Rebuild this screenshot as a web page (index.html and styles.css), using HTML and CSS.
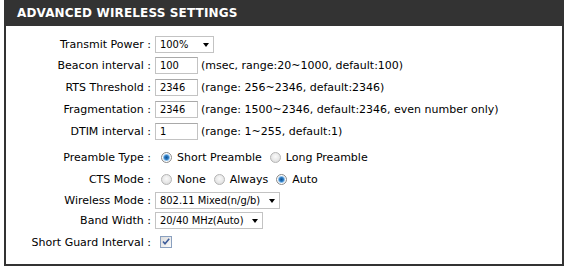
FILE: index.html
```html
<!DOCTYPE html>
<html lang="en">
<head>
    <meta charset="UTF-8">
    <meta name="viewport" content="width=device-width, initial-scale=1.0">
    <title>Advanced Wireless Settings</title>
    <link rel="stylesheet" href="styles.css">
</head>
<body>
    <div class="box">
        <h2 class="box-title">ADVANCED WIRELESS SETTINGS</h2>
        <div class="form">
            <div class="row row-power">
                <label class="lbl">Transmit Power :</label>
                <div class="field">
                    <span class="select-wrap">
                        <select class="select w-power">
                            <option>100%</option>
                        </select>
                    </span>
                </div>
            </div>
            <div class="row">
                <label class="lbl">Beacon interval :</label>
                <div class="field">
                    <input class="text" type="text" value="100">
                    <span class="hint">(msec, range:20~1000, default:100)</span>
                </div>
            </div>
            <div class="row">
                <label class="lbl">RTS Threshold :</label>
                <div class="field">
                    <input class="text" type="text" value="2346">
                    <span class="hint">(range: 256~2346, default:2346)</span>
                </div>
            </div>
            <div class="row">
                <label class="lbl">Fragmentation :</label>
                <div class="field">
                    <input class="text" type="text" value="2346">
                    <span class="hint">(range: 1500~2346, default:2346, even number only)</span>
                </div>
            </div>
            <div class="row">
                <label class="lbl">DTIM interval :</label>
                <div class="field">
                    <input class="text" type="text" value="1">
                    <span class="hint">(range: 1~255, default:1)</span>
                </div>
            </div>
            <div class="row row-preamble">
                <label class="lbl">Preamble Type :</label>
                <div class="field">
                    <label class="opt"><input class="radio" type="radio" name="preamble" checked>Short Preamble</label>
                    <label class="opt"><input class="radio" type="radio" name="preamble">Long Preamble</label>
                </div>
            </div>
            <div class="row">
                <label class="lbl">CTS Mode :</label>
                <div class="field">
                    <label class="opt"><input class="radio" type="radio" name="cts">None</label>
                    <label class="opt"><input class="radio" type="radio" name="cts">Always</label>
                    <label class="opt"><input class="radio" type="radio" name="cts" checked>Auto</label>
                </div>
            </div>
            <div class="row row-select">
                <label class="lbl">Wireless Mode :</label>
                <div class="field">
                    <span class="select-wrap">
                        <select class="select w-mode">
                            <option>802.11 Mixed(n/g/b)</option>
                        </select>
                    </span>
                </div>
            </div>
            <div class="row row-band">
                <label class="lbl">Band Width :</label>
                <div class="field">
                    <span class="select-wrap">
                        <select class="select w-band">
                            <option>20/40 MHz(Auto)</option>
                        </select>
                    </span>
                </div>
            </div>
            <div class="row">
                <label class="lbl">Short Guard Interval :</label>
                <div class="field">
                    <span class="check">
                        <svg width="10" height="10" viewBox="0 0 10 10">
                            <path d="M2 4.5 L4 6.8 L8.2 1.8" fill="none" stroke="#3d5c9a" stroke-width="1.6"/>
                        </svg>
                    </span>
                </div>
            </div>
        </div>
    </div>
</body>
</html>
```

FILE: styles.css
```css
* {
    margin: 0;
    padding: 0;
    box-sizing: border-box;
}

body {
    background: #fff;
    font-family: "DejaVu Sans", Verdana, sans-serif;
    font-size: 11px;
    color: #000;
}

.box {
    width: 560px;
    margin-left: 4px;
    border: 2px solid #333;
    border-top: none;
}

.box-title {
    height: 26px;
    margin: 0 -2px;
    padding-left: 13px;
    background: #333;
    color: #fff;
    font-size: 12px;
    font-weight: bold;
    line-height: 27px;
    letter-spacing: 0.15px;
}

.form {
    padding: 8px 0 11px;
}

.row {
    display: flex;
    align-items: center;
    height: 22px;
}

.row-power {
    height: 20px;
}

.row-preamble {
    margin-top: 4px;
}

.row-select {
    height: 20px;
}

.row-band {
    height: 21px;
}

.lbl {
    width: 145px;
    text-align: right;
    white-space: nowrap;
}

.field {
    display: flex;
    align-items: center;
    margin-left: 4px;
    white-space: nowrap;
}

.text {
    width: 43px;
    height: 17px;
    padding: 0 4px;
    border: 1px solid #c3c3c3;
    border-top-color: #a9a9a9;
    font-family: "DejaVu Sans Condensed", "DejaVu Sans", sans-serif;
    font-size: 11px;
    color: #000;
    outline: none;
}

.hint {
    margin-left: 3px;
}

.select-wrap {
    position: relative;
    display: inline-block;
}

.select-wrap::after {
    content: "";
    position: absolute;
    right: 5px;
    top: 7px;
    border-left: 3.5px solid transparent;
    border-right: 3.5px solid transparent;
    border-top: 4px solid #000;
    pointer-events: none;
}

.select {
    appearance: none;
    -webkit-appearance: none;
    display: block;
    height: 17px;
    padding: 0 0 0 4px;
    border: 1px solid #c3c3c3;
    border-radius: 0;
    background: #fff;
    font-family: "DejaVu Sans Condensed", "DejaVu Sans", sans-serif;
    font-size: 11px;
    line-height: 15px;
    color: #000;
}

.w-power {
    width: 59px;
}

.w-mode {
    width: 125px;
}

.w-band {
    width: 108px;
}

.opt {
    display: flex;
    align-items: center;
    margin-right: 8px;
}

.radio {
    appearance: none;
    -webkit-appearance: none;
    width: 11px;
    height: 11px;
    margin: 0 5px 0 6px;
    border: 1px solid #b4b4b4;
    border-radius: 50%;
    background: radial-gradient(circle at 50% 40%, #fafafa 0, #e6e6e6 60%, #d2d2d2 100%);
}

.opt + .opt .radio {
    margin-left: 0;
}

.radio:checked {
    border-color: #8a8a8a;
    background: radial-gradient(circle, #124f8c 0, #2c7cc4 2px, #8fc0ea 3px, #fff 4px, #e4e4e4 5.5px);
}

.check {
    display: flex;
    align-items: center;
    justify-content: center;
    width: 12px;
    height: 12px;
    margin-left: 5px;
    border: 1px solid #8aa0bf;
    background: linear-gradient(135deg, #dcdcdc, #fbfbfb);
}
```
